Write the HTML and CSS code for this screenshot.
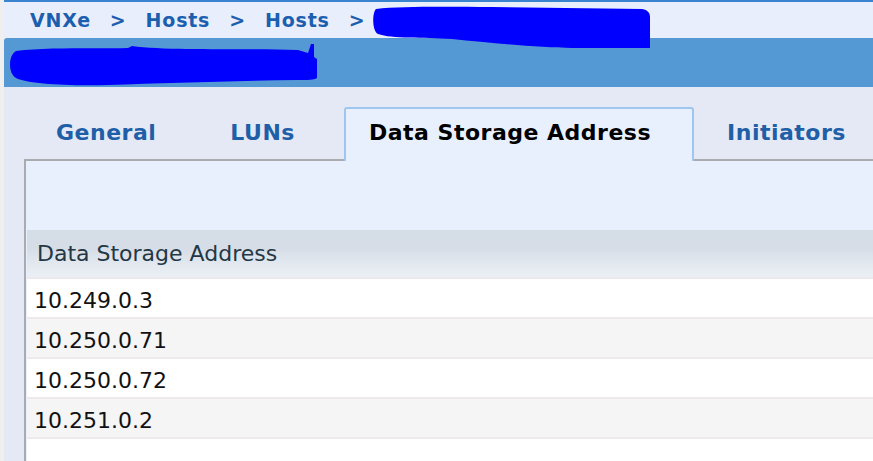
FILE: index.html
```html
<!DOCTYPE html>
<html lang="en">

<head>
    <meta charset="UTF-8">
    <meta name="viewport" content="width=device-width, initial-scale=1.0">
    <title>Host Details</title>
    <link rel="stylesheet" href="styles.css">
</head>

<body>
    <div class="edge"></div>

    <div class="main">
        <div class="top-line"></div>

        <!-- Breadcrumb -->
        <div class="breadcrumb">
            <a href="#">VNXe</a>
            <span class="sep">&gt;</span>
            <a href="#">Hosts</a>
            <span class="sep">&gt;</span>
            <a href="#">Hosts</a>
            <span class="sep">&gt;</span>
            <svg class="redact redact-crumb" width="278" height="46" viewBox="0 0 278 46">
                <path d="M4 6 C30 3 80 4 120 4 L270 6 C276 7 278 10 278 14 L278 45 L200 45 C170 45 120 40 80 36 C50 34 20 36 6 31 C0 28 0 10 4 6 Z" />
            </svg>
        </div>

        <!-- Title bar -->
        <div class="title-bar">
            <svg class="redact redact-title" width="310" height="43" viewBox="0 0 310 43">
                <path d="M8 8 C40 4 90 6 120 5 L124 3 C160 8 230 5 290 7 L300 10 L303 1 L306 1 L306 14 L309 16 L309 35 C306 37 300 37 290 37 C220 38 160 40 100 42 C60 43 20 41 8 35 C0 31 0 12 8 8 Z" />
            </svg>
        </div>

        <div class="content">
            <div class="tabs">
                <a href="#" class="tab">General</a>
                <a href="#" class="tab">LUNs</a>
                <a href="#" class="tab active">Data Storage Address</a>
                <a href="#" class="tab">Initiators</a>
            </div>

            <div class="panel">
                <div class="grid">
                    <div class="grid-header">Data Storage Address</div>
                    <div class="grid-row">10.249.0.3</div>
                    <div class="grid-row alt">10.250.0.71</div>
                    <div class="grid-row">10.250.0.72</div>
                    <div class="grid-row alt">10.251.0.2</div>
                </div>
            </div>
        </div>
    </div>
</body>

</html>
```

FILE: styles.css
```css
/* Basic Reset */
* {
    margin: 0;
    padding: 0;
    box-sizing: border-box;
}

body {
    font-family: 'DejaVu Sans', Verdana, sans-serif;
    display: flex;
    height: 100vh;
    overflow: hidden;
    background-color: #efefef;
}

.edge {
    width: 4px;
    background-color: #efefef;
}

.main {
    flex: 1;
    display: flex;
    flex-direction: column;
    overflow: hidden;
}

.top-line {
    height: 2px;
    background-color: #3a84cf;
}

/* Breadcrumb */
.breadcrumb {
    position: relative;
    height: 36px;
    display: flex;
    align-items: center;
    gap: 19px;
    padding-left: 26px;
    background-color: #e8eefc;
    font-size: 19px;
    font-weight: bold;
    letter-spacing: 0.8px;
    color: #1c5fae;
}

.breadcrumb a {
    color: #1c5fae;
    text-decoration: none;
}

.redact {
    position: absolute;
    z-index: 2;
}

.redact path {
    fill: #0000ff;
}

.redact-crumb {
    left: 368px;
    top: 1px;
}

/* Title bar */
.title-bar {
    position: relative;
    height: 49px;
    background-color: #5499d4;
    border-top-left-radius: 3px;
}

.redact-title {
    left: 4px;
    top: 5px;
}

/* Tabs */
.content {
    flex: 1;
    display: flex;
    flex-direction: column;
    padding: 20px 0 0 20px;
    background-color: #e5e9f5;
}

.tabs {
    position: relative;
    z-index: 1;
    display: flex;
    margin-bottom: -2px;
}

.tab {
    height: 54px;
    display: flex;
    align-items: center;
    margin-left: 8px;
    padding: 0 39px 6px 23px;
    border: 2px solid transparent;
    border-bottom: none;
    border-radius: 3px 3px 0 0;
    font-size: 22px;
    font-weight: bold;
    letter-spacing: 0.5px;
    color: #1f5fa8;
    text-decoration: none;
    white-space: nowrap;
}

.tab:first-child {
    margin-left: 7px;
}

.tab.active {
    padding-right: 41px;
    background-color: #e8effd;
    border-color: #9ec6ee;
    color: #000;
}

/* Panel and grid */
.panel {
    flex: 1;
    display: flex;
    flex-direction: column;
    padding: 69px 0 0 1px;
    border-top: 2px solid #a9abae;
    border-left: 2px solid #a9abae;
    background-color: #e8effd;
}

.grid {
    flex: 1;
    background-color: #fff;
}

.grid-header {
    height: 49px;
    display: flex;
    align-items: center;
    padding: 0 0 0 10px;
    border-bottom: 2px solid #ece8ec;
    background: linear-gradient(to bottom, #d5dde6 0%, #d6dde6 40%, #dce3eb 55%, #e4e9f0 75%, #ebeef5 100%);
    font-size: 22px;
    color: #233744;
}

.grid-row {
    height: 40px;
    display: flex;
    align-items: center;
    padding: 4px 0 0 7px;
    border-bottom: 2px solid #eeeaec;
    font-size: 22px;
    color: #111;
}

.grid-row.alt {
    background-color: #f5f5f5;
}
```
